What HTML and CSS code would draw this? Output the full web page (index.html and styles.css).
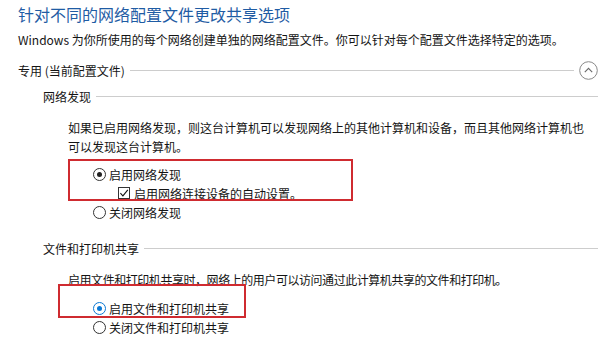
FILE: index.html
```html
<!DOCTYPE html>
<html lang="zh-CN">
<head>
    <meta charset="UTF-8">
    <title>高级共享设置</title>
    <link rel="stylesheet" href="styles.css">
</head>
<body>

<div class="page">
    <h1 class="title">针对不同的网络配置文件更改共享选项</h1>
    <p class="desc">Windows 为你所使用的每个网络创建单独的网络配置文件。你可以针对每个配置文件选择特定的选项。</p>

    <div class="profile-head">
        <span>专用 (当前配置文件)</span>
        <span class="rule"></span>
        <span class="collapse">
            <svg width="19" height="19" viewBox="0 0 19 19">
                <circle cx="9.5" cy="9.5" r="8.8" fill="none" stroke="#8a8a8a" stroke-width="1"/>
                <path d="M5.8 11.2 L9.5 7.4 L13.2 11.2" fill="none" stroke="#6a6a6a" stroke-width="1.1"/>
            </svg>
        </span>
    </div>

    <div class="group-head head-discovery">
        <span>网络发现</span>
        <span class="rule"></span>
    </div>
    <p class="info info-discovery">如果已启用网络发现，则这台计算机可以发现网络上的其他计算机和设备，而且其他网络计算机也<br>可以发现这台计算机。</p>
    <div class="options options-discovery">
        <label class="option"><span class="radio checked"></span>启用网络发现</label>
        <label class="option sub">
            <span class="check">
                <svg width="12" height="12" viewBox="0 0 12 12">
                    <rect x="0.5" y="0.5" width="11" height="11" fill="#fff" stroke="#333" stroke-width="1"/>
                    <path d="M2.4 6.2 L4.9 8.8 L9.8 2.8" fill="none" stroke="#111" stroke-width="1.1"/>
                </svg>
            </span>启用网络连接设备的自动设置。</label>
        <label class="option"><span class="radio"></span>关闭网络发现</label>
    </div>

    <div class="group-head head-sharing">
        <span>文件和打印机共享</span>
        <span class="rule"></span>
    </div>
    <p class="info info-sharing">启用文件和打印机共享时，网络上的用户可以访问通过此计算机共享的文件和打印机。</p>
    <div class="options options-sharing">
        <label class="option"><span class="radio focus"></span>启用文件和打印机共享</label>
        <label class="option"><span class="radio"></span>关闭文件和打印机共享</label>
    </div>

    <!-- annotation boxes drawn over the dialog -->
    <div class="mark mark-discovery"></div>
    <div class="mark mark-sharing"></div>
</div>

</body>
</html>
```

FILE: styles.css
```css
body {
    margin: 0;
    background-color: #fff;
    font-family: "Noto Sans CJK SC", "Noto Sans", sans-serif;
    font-size: 12px;
    color: #141414;
}
.page {
    position: relative;
    width: 616px;
    height: 343px;
    padding: 0 18px;
    box-sizing: border-box;
    overflow: hidden;
}
.title {
    margin: 0;
    height: 28px;
    line-height: 28px;
    font-size: 16px;
    font-weight: normal;
    color: #1f5ca4;
}
.desc {
    margin: 0;
    height: 24px;
    line-height: 24px;
}
.profile-head,
.group-head {
    display: flex;
    align-items: center;
    height: 24px;
    gap: 5px;
}
.profile-head {
    margin-top: 6px;
}
.rule {
    flex: 1;
    height: 1px;
    background-color: #cdcdcd;
}
.collapse {
    display: flex;
}
.group-head {
    padding-left: 25px;
}
.head-discovery {
    margin-top: 2px;
}
.head-sharing {
    margin-top: 14.5px;
}
.info {
    margin: 0;
    padding-left: 50px;
    line-height: 19px;
}
.info-discovery {
    margin-top: 9.5px;
}
.info-sharing {
    margin-top: 9.5px;
    letter-spacing: -0.45px;
}
.options {
    padding-left: 75px;
}
.options-discovery {
    margin-top: 9px;
}
.options-sharing {
    margin-top: 10px;
}
.option {
    display: flex;
    align-items: center;
    height: 19px;
}
.option.sub {
    padding-left: 25px;
}
.radio {
    position: relative;
    width: 11px;
    height: 11px;
    border: 1px solid #333;
    border-radius: 50%;
    margin-right: 3px;
    background-color: #fff;
}
.radio.checked::after,
.radio.focus::after {
    content: "";
    position: absolute;
    left: 3px;
    top: 3px;
    width: 5px;
    height: 5px;
    border-radius: 50%;
    background-color: #222;
}
.radio.focus {
    border-color: #0a78d4;
}
.radio.focus::after {
    background-color: #0a78d4;
}
.check {
    display: flex;
    margin-right: 4px;
}
.mark {
    position: absolute;
    border: 2px solid #cf2b30;
}
.mark-discovery {
    left: 68px;
    top: 159px;
    width: 281px;
    height: 38px;
}
.mark-sharing {
    left: 58px;
    top: 284px;
    width: 184px;
    height: 30px;
}
```
